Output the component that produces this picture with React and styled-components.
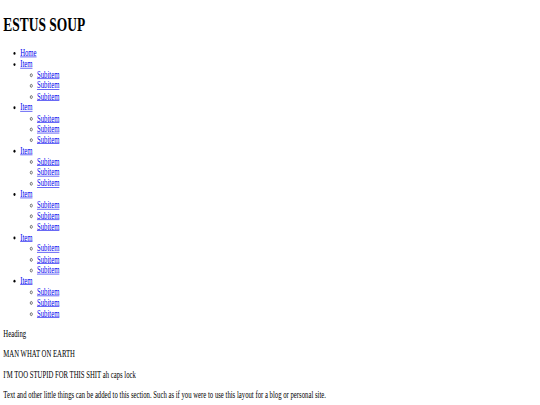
import React from "react";
import styled, { createGlobalStyle } from "styled-components";

const Global = createGlobalStyle`
  html, body { margin: 0; padding: 0; background: #fff; overflow: hidden; }
`;

const Viewport = styled.div`
  display: flow-root;
  width: 1290px;
  padding-top: 1.5px;
  transform: scale(0.42, 0.59);
  transform-origin: 0 0;
`;

const PageBody = styled.div`
  margin: 8px;
  font-family: "Liberation Serif", "Times New Roman", serif;
  font-size: 16px;
  line-height: 1.15;
  color: #000;
`;

const Title = styled.h1`
  font-size: 32px;
  font-weight: bold;
  margin: 21.44px 0;
`;

const NavList = styled.ul`
  list-style-type: ${(p) => (p.$nested ? "circle" : "disc")};
  margin: ${(p) => (p.$nested ? "0" : "16px 0")};
  padding-left: 40px;
`;

const NavLink = styled.a`
  color: #0000ee;
  text-decoration: underline;
`;

const Para = styled.p`
  margin: 16px 0;
`;

const items = [1, 2, 3, 4, 5, 6];

export default function App() {
  return (
    <>
      <Global />
      <Viewport>
        <PageBody>
          <Title>ESTUS SOUP</Title>
          <NavList>
            <li>
              <NavLink href="#">Home</NavLink>
            </li>
            {items.map((i) => (
              <li key={i}>
                <NavLink href="#">Item</NavLink>
                <NavList $nested>
                  {[1, 2, 3].map((j) => (
                    <li key={j}>
                      <NavLink href="#">Subitem</NavLink>
                    </li>
                  ))}
                </NavList>
              </li>
            ))}
          </NavList>
          <Para>Heading</Para>
          <Para>MAN WHAT ON EARTH</Para>
          <Para>I'M TOO STUPID FOR THIS SHIT ah caps lock</Para>
          <Para>
            Text and other little things can be added to this section. Such as
            if you were to use this layout for a blog or personal site.
          </Para>
        </PageBody>
      </Viewport>
    </>
  );
}
